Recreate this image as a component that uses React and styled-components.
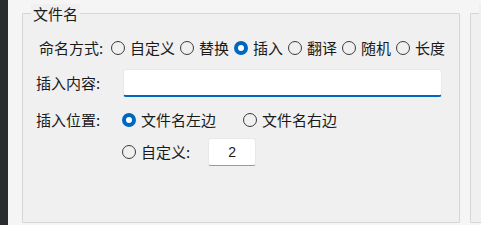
import React from "react";
import styled, { createGlobalStyle } from "styled-components";

const Global = createGlobalStyle`
  html, body { margin: 0; padding: 0; background: #f5f5f5; overflow: hidden; }
  body { font-family: "Microsoft YaHei", "Noto Sans CJK SC", "Noto Sans", sans-serif; font-size: 15px; color: #1a1a1a; }
`;

const Page = styled.div`
  display: flex;
  width: 481px;
  height: 225px;
  overflow: hidden;
`;

const SideStrip = styled.div`
  width: 8px;
  flex: none;
  background: #2b2c30;
`;

const Panels = styled.div`
  display: flex;
  gap: 10px;
  padding: 13px 0 0 14px;
`;

const GroupBox = styled.div`
  position: relative;
  flex: none;
  width: ${(p) => p.$width}px;
  height: 210px;
  box-sizing: border-box;
  border: 1px solid #d6d6d6;
  border-radius: 1px;
  background: #f0f0f0;
  padding: 24px 0 0 13px;
  display: flex;
  flex-direction: column;
`;

const GroupTitle = styled.span`
  position: absolute;
  top: -10px;
  left: 8px;
  padding: 0 2px;
  line-height: 20px;
  background: #f0f0f0;
  color: #1a1a1a;
`;

const Row = styled.div`
  display: flex;
  align-items: center;
  height: ${(p) => p.$h || 20}px;
  margin-top: ${(p) => p.$mt || 0}px;
  padding-left: ${(p) => p.$pl || 0}px;
`;

const Label = styled.span`
  width: ${(p) => (p.$w ? p.$w + "px" : "auto")};
  flex: none;
  white-space: nowrap;
  line-height: 20px;
`;

const RadioItem = styled.label`
  display: flex;
  align-items: center;
  gap: 5px;
  margin-right: ${(p) => p.$mr ?? 5}px;
  white-space: nowrap;
  line-height: 20px;
`;

const RadioDot = styled.span`
  width: 14px;
  height: 14px;
  box-sizing: border-box;
  border-radius: 50%;
  flex: none;
  border: ${(p) => (p.$on ? "4px solid #0067c0" : "1px solid #3a3a3a")};
  background: ${(p) => (p.$on ? "#fff" : "transparent")};
`;

const TextInput = styled.div`
  box-sizing: border-box;
  width: ${(p) => p.$w}px;
  height: 28px;
  background: #fff;
  border: 1px solid #e8e8e8;
  border-bottom: ${(p) => (p.$focus ? "2px solid #0067c0" : "1px solid #9a9a9a")};
  border-radius: 3px;
  display: flex;
  align-items: center;
  justify-content: center;
  margin-left: ${(p) => p.$ml || 0}px;
  font-size: 14px;
  font-family: "Segoe UI", "Liberation Sans", "Noto Sans", sans-serif;
`;

function Radio({ on, children, mr }) {
  return (
    <RadioItem $mr={mr}>
      <RadioDot $on={on} />
      <span>{children}</span>
    </RadioItem>
  );
}

export default function App() {
  const modes = ["自定义", "替换", "插入", "翻译", "随机", "长度"];
  return (
    <>
      <Global />
      <Page>
        <SideStrip />
        <Panels>
          <GroupBox $width={438}>
            <GroupTitle>文件名</GroupTitle>
            <Row $pl={3}>
              <Label $w={72}>命名方式:</Label>
              {modes.map((m) => (
                <Radio key={m} on={m === "插入"}>
                  {m}
                </Radio>
              ))}
            </Row>
            <Row $mt={11} $h={28}>
              <Label $w={87}>插入内容:</Label>
              <TextInput $w={319} $focus />
            </Row>
            <Row $mt={13}>
              <Label $w={86}>插入位置:</Label>
              <Radio on mr={27}>
                文件名左边
              </Radio>
              <Radio>文件名右边</Radio>
            </Row>
            <Row $mt={8} $h={28}>
              <Label $w={86} />
              <Radio mr={0}>自定义:</Radio>
              <TextInput $w={48} $ml={18}>
                2
              </TextInput>
            </Row>
          </GroupBox>
          <GroupBox $width={200}>
            <GroupTitle>文</GroupTitle>
          </GroupBox>
        </Panels>
      </Page>
    </>
  );
}
